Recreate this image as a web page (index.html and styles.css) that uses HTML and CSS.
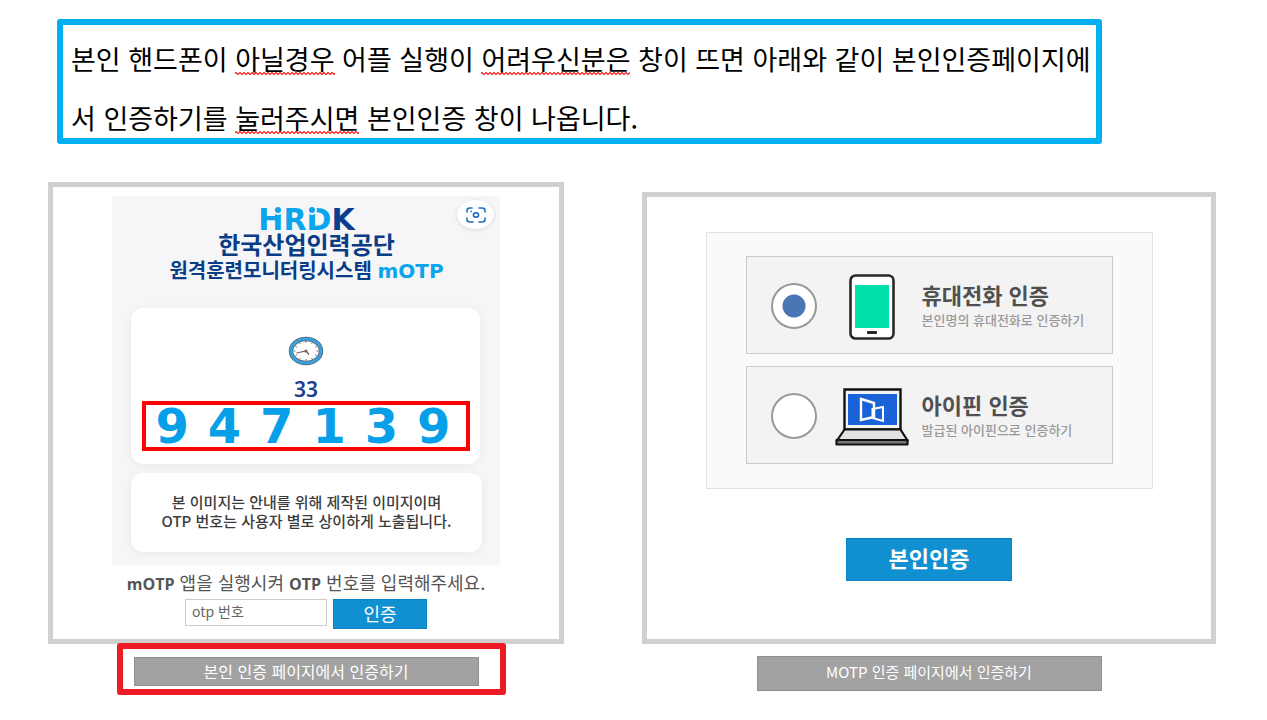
FILE: index.html
```html
<!DOCTYPE html>
<html lang="ko">
<head>
    <meta charset="UTF-8">
    <meta name="viewport" content="width=device-width, initial-scale=1">
    <title>본인인증 안내</title>
    <link rel="stylesheet" href="styles.css">
</head>
<body>
<!-- 안내 문구 -->
<div class="notice">
    <p>본인 핸드폰이 <span class="typo">아닐경우</span> 어플 실행이 <span class="typo">어려우신분은</span> 창이 뜨면 아래와 같이 본인인증페이지에서 인증하기를 <span class="typo">눌러주시면</span> 본인인증 창이 나옵니다.</p>
</div>

<main class="steps">
    <!-- mOTP 인증 -->
    <section class="step">
        <form class="panel panel-otp">
            <div class="app">
                <button type="button" class="lens" aria-label="이미지 검색">
                    <svg viewBox="0 0 20 16" width="20" height="16" fill="none" stroke="#1f6fc0" stroke-width="1.6" stroke-linecap="round">
                        <path d="M1 5V3.500Q1 1 4 1h2M13 1h3q3 0 3 2.500V5M19 11v1.500q0 2.500-3 2.500h-3M7 15H4q-3 0-3-2.500V11"/>
                        <ellipse cx="10" cy="8" rx="2.600" ry="2.100"/>
                        <path d="M5.200 4.400h.1"/>
                    </svg>
                </button>
                <div class="logo"><span class="logo-h">H</span><span class="logo-r">R</span><span class="logo-d">D</span><span class="logo-k">K</span></div>
                <div class="org">한국산업인력공단</div>
                <h1 class="system">원격훈련모니터링시스템 <span class="motp">mOTP</span></h1>
                <div class="card card-code">
                    <svg class="clock" viewBox="0 0 36 30" width="36" height="30">
                        <ellipse cx="18" cy="15" rx="15" ry="12" fill="#fff" stroke="#56636f" stroke-width="4.500"/>
                        <ellipse cx="18" cy="15" rx="15" ry="12" fill="none" stroke="#3a9fdc" stroke-width="3"/>
                        <path d="M18 5v2M18 23v2M5.500 15h2M28.500 15h2M11.500 6.500l1 1.500M24.500 6.500l-1 1.500M11.500 23.500l1-1.500M24.500 23.500l-1-1.500M7.500 10.500l1.500.8M28.500 10.500l-1.500.8M7.500 19.500l1.500-.8M28.500 19.500l-1.500-.8" stroke="#777" stroke-width="1"/>
                        <path d="M8.500 17L18 15l3 3.500" fill="none" stroke="#6f625c" stroke-width="1.200"/>
                        <circle cx="18" cy="15" r="1.500" fill="#6f625c"/>
                    </svg>
                    <div class="seconds">33</div>
                    <div class="code">
                        <span>9</span><span>4</span><span>7</span><span>1</span><span>3</span><span>9</span>
                    </div>
                </div>
                <div class="card card-info">
                    <p>본 이미지는 안내를 위해 제작된 이미지이며<br>OTP 번호는 사용자 별로 상이하게 노출됩니다.</p>
                </div>
            </div>
            <label class="otp-label" for="otp"><b>mOTP</b> 앱을 실행시켜 <b>OTP</b> 번호를 입력해주세요.</label>
            <div class="otp-row">
                <input class="otp-input" type="text" id="otp" placeholder="otp 번호">
                <button type="button" class="btn btn-small">인증</button>
            </div>
        </form>
        <div class="marked">
            <a class="switch" href="#self">본인 인증 페이지에서 인증하기</a>
        </div>
    </section>

    <!-- 본인 인증 -->
    <section class="step step-self" id="self">
        <form class="panel panel-self">
            <div class="methods">
                <label class="method">
                    <input type="radio" name="method" checked>
                    <span class="method-icon">
                        <svg viewBox="0 0 46 66" width="46" height="66">
                            <rect x="1.500" y="1.500" width="43" height="63" rx="5" fill="#fff" stroke="#2b2727" stroke-width="2.600"/>
                            <rect x="6" y="11" width="34" height="43" fill="#00e0aa"/>
                            <rect x="18" y="57" width="10" height="3" rx="1" fill="#2b2727"/>
                        </svg>
                    </span>
                    <span class="method-text">
                        <strong>휴대전화 인증</strong>
                        <small>본인명의 휴대전화로 인증하기</small>
                    </span>
                </label>
                <label class="method">
                    <input type="radio" name="method">
                    <span class="method-icon">
                        <svg viewBox="0 0 74 58" width="74" height="58">
                            <path d="M9.500 1.500h56v40h-56z" fill="#f3f3f3" stroke="#111" stroke-width="2.400"/>
                            <path d="M13 6h49v31H13z" fill="#1a62d8"/>
                            <path d="M9.500 41.500h56l7 11H2z" fill="#e3e1e1" stroke="#111" stroke-width="2.200" stroke-linejoin="round"/>
                            <path d="M1.500 52h71v4.500h-71z" fill="#777" stroke="#111" stroke-width="2.200" stroke-linejoin="round"/>
                            <path d="M26 11l13 4v14l-13 3z" fill="none" stroke="#fff" stroke-width="2.400"/>
                            <path d="M37.500 21l10.500-2v14l-10.500-3z" fill="none" stroke="#fff" stroke-width="2"/>
                        </svg>
                    </span>
                    <span class="method-text">
                        <strong>아이핀 인증</strong>
                        <small>발급된 아이핀으로 인증하기</small>
                    </span>
                </label>
            </div>
            <button type="button" class="btn btn-large">본인인증</button>
        </form>
        <a class="switch switch-tall" href="#otp">MOTP 인증 페이지에서 인증하기</a>
    </section>
</main>
</body>
</html>
```
FILE: styles.css
```css
* {
    box-sizing: border-box;
}

body {
    margin: 0;
    padding: 19px 51px 24px 48px;
    background: #fff;
    color: #000;
    font-family: "Noto Sans CJK KR", "Noto Sans", sans-serif;
}

p, h1 {
    margin: 0;
}

button, input {
    font-family: inherit;
}

/* 상단 안내 */
.notice {
    margin: 0 114px 38px 9px;
    height: 125px;
    padding: 4px 4px 0 8px;
    border: 6px solid #00b0f0;
    border-radius: 3px;
    font-size: 27px;
    line-height: 59px;
}

.typo {
    background:
        linear-gradient(45deg, transparent 40%, #f44 40%, #f44 60%, transparent 60%) 0 calc(100% - 3px) / 4px 3px repeat-x,
        linear-gradient(-45deg, transparent 40%, #f44 40%, #f44 60%, transparent 60%) 2px calc(100% - 3px) / 4px 3px repeat-x;
}

/* 두 단계 */
.steps {
    display: grid;
    grid-template-columns: 516fr 574fr;
    gap: 78px;
    align-items: start;
}

.step {
    display: flex;
    flex-direction: column;
    align-items: center;
}

.step-self {
    margin-top: 10px;
}

.panel {
    width: 100%;
    display: flex;
    flex-direction: column;
    align-items: center;
    border: 5px solid #d0d0d0;
}

.panel-otp {
    padding: 9px 0 10px;
}

.panel-self {
    padding: 35px 0 58px;
}

/* 앱 화면 */
.app {
    position: relative;
    width: 388px;
    max-width: 100%;
    padding: 10px 18px 13px 19px;
    background: #f6f6f9;
    text-align: center;
}

.lens {
    position: absolute;
    top: 4px;
    right: 6px;
    width: 37px;
    height: 29px;
    padding: 0;
    display: flex;
    align-items: center;
    justify-content: center;
    border: 0;
    border-radius: 50%;
    background: #fff;
    box-shadow: 0 1px 4px rgba(0, 0, 0, 0.12);
}

.logo {
    font: bold 30px/28px "DejaVu Sans", sans-serif;
    color: #0aa5ea;
}

.logo-h,
.logo-d {
    position: relative;
}

/* H 오른쪽 기둥과 D 왼쪽 위의 점 */
.logo-h::after,
.logo-d::after {
    content: "";
    position: absolute;
    width: 6px;
    height: 6px;
    border-radius: 50%;
    background: #0aa5ea;
    box-shadow: 0 0 0 2px #f6f6f9;
}

.logo-h::after {
    top: 5px;
    right: 2px;
}

.logo-d::after {
    top: 5px;
    left: 2px;
}

.logo-k {
    color: #0b3d91;
}

.org {
    color: #0b3d87;
    font-size: 24px;
    font-weight: bold;
    line-height: 20px;
}

.system {
    color: #0b3d87;
    font-size: 20px;
    font-weight: bold;
    line-height: 32px;
    white-space: nowrap;
}

.motp {
    color: #0aa5ea;
    font-family: "DejaVu Sans", sans-serif;
}

.card {
    border-radius: 12px;
    background: #fff;
    box-shadow: 0 1px 8px rgba(0, 0, 0, 0.06);
}

.card-code {
    display: flex;
    flex-direction: column;
    margin: 21px 2px 9px 0;
    padding: 28px 10px 13px 11px;
}

.clock {
    align-self: center;
}

.seconds {
    margin-top: 12px;
    color: #1d3f8f;
    font: 600 21px/23px "Noto Sans", sans-serif;
}

.code {
    display: grid;
    grid-template-columns: repeat(6, 1fr);
    padding-right: 6px;
    border: 4px solid #f00;
    color: #069fe8;
    font: bold 48px/42px "DejaVu Sans", sans-serif;
}

.card-info {
    padding: 19px 0 22px;
    color: #3c3c3c;
    font-size: 15px;
    font-weight: 500;
    line-height: 19px;
    white-space: nowrap;
}

/* OTP 입력 */
.otp-label {
    color: #555;
    font-size: 18px;
    line-height: 34px;
}

.otp-label b {
    font: bold 16px "Open Sans", sans-serif;
}

.otp-row {
    display: flex;
    gap: 6px;
    align-items: flex-start;
}

.otp-input {
    width: 142px;
    height: 27px;
    padding: 0 6px 3px;
    border: 1px solid #ccc;
    font-size: 14px;
}

.otp-input::placeholder {
    color: #666;
}

.btn {
    padding: 0;
    border: 1px solid #0a83c4;
    background: #1090d0;
    color: #fff;
}

.btn-small {
    width: 94px;
    height: 30px;
    padding-bottom: 2px;
    font-size: 18px;
    line-height: 26px;
}

.btn-large {
    width: 166px;
    height: 43px;
    margin-top: 49px;
    padding-bottom: 5px;
    font-size: 22px;
    font-weight: bold;
    line-height: 34px;
}

.marked {
    position: relative;
    margin: -1px 0 0 10px;
    padding: 8px 21px 3px 11px;
    border: 6px solid #ed1c24;
    border-radius: 3px;
}

.switch {
    display: block;
    width: 345px;
    max-width: 100%;
    border: 1px solid #909090;
    background: #a2a2a2;
    color: #fff;
    font-size: 16px;
    line-height: 27px;
    text-align: center;
    text-decoration: none;
}

.switch-tall {
    margin-top: 12px;
    padding-bottom: 3px;
    font-size: 15px;
    line-height: 30px;
}

/* 인증 수단 */
.methods {
    display: flex;
    flex-direction: column;
    gap: 12px;
    width: 447px;
    max-width: 100%;
    padding: 23px 39px 24px;
    border: 1px solid #e2e2e2;
    background: #fafafa;
}

.method {
    display: flex;
    align-items: center;
    height: 98px;
    padding: 2px 0 0 24px;
    border: 1px solid #cacaca;
    background: #f3f3f3;
}

.method input {
    appearance: none;
    flex: none;
    width: 46px;
    height: 46px;
    margin: 0 18px 0 0;
    border: 2px solid #999;
    border-radius: 50%;
    background: #fff;
}

.method input:checked {
    background: radial-gradient(circle, #4a76b5 11px, #fff 12px);
}

.method-icon {
    display: flex;
    flex: none;
    justify-content: center;
    width: 74px;
    margin-right: 13px;
    padding-top: 2px;
}

.method-text {
    display: flex;
    flex-direction: column;
    white-space: nowrap;
}

.method-text strong {
    color: #505050;
    font-size: 22px;
    font-weight: bold;
    line-height: 28px;
}

.method-text small {
    color: #999;
    font-size: 13px;
    font-weight: 500;
    line-height: 24px;
}
```
